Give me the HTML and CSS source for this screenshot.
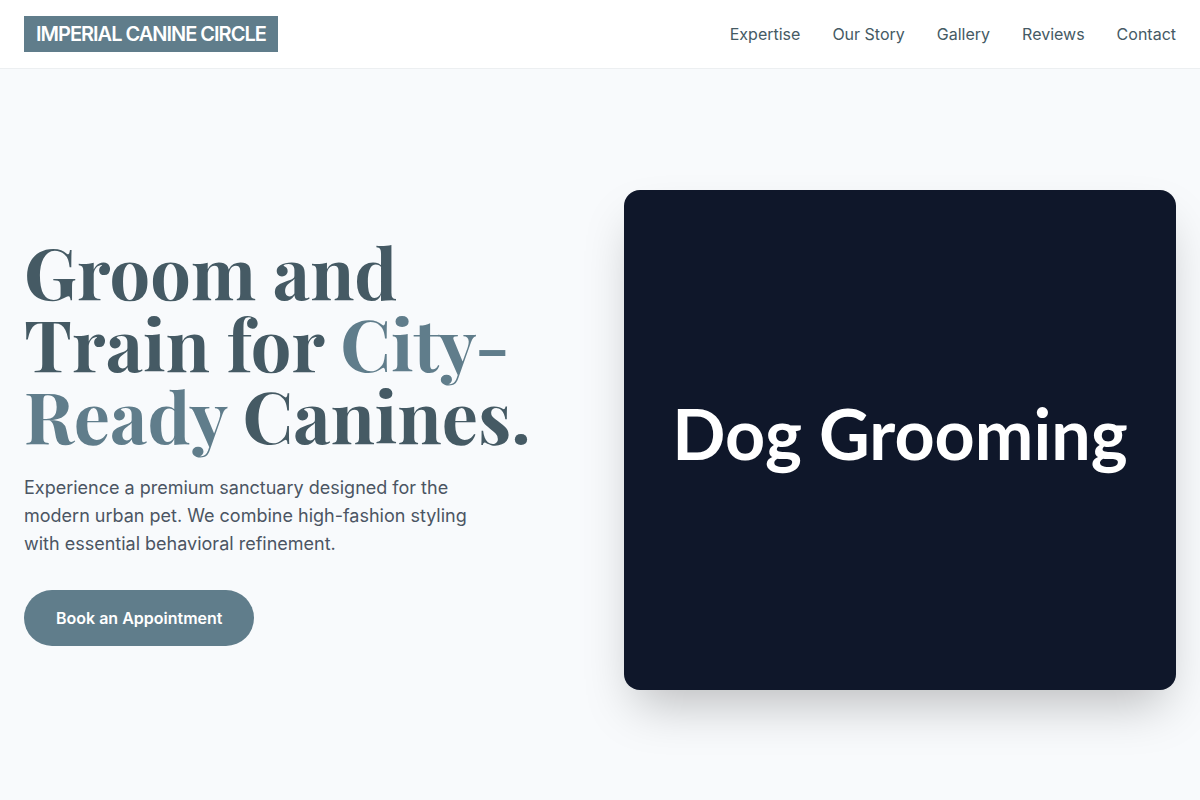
FILE: index.html
```
<!DOCTYPE html>
<html lang="en">
<head>
    <meta charset="UTF-8">
    <meta name="viewport" content="width=device-width, initial-scale=1.0">
    <title>Imperial Canine Circle</title>
    <link rel="stylesheet" href="styles.css">
</head>
<body>
    <header class="site-header">
        <a href="#home" class="logo">IMPERIAL CANINE CIRCLE</a>
        <nav class="nav">
            <a href="#expertise">Expertise</a>
            <a href="#story">Our Story</a>
            <a href="#gallery">Gallery</a>
            <a href="#reviews">Reviews</a>
            <a href="#contact">Contact</a>
        </nav>
    </header>

    <section class="hero" id="home">
        <div class="hero-text">
            <h1>Groom and Train for <span class="accent">City-Ready</span> Canines.</h1>
            <p>Experience a premium sanctuary designed for the modern urban pet. We combine high-fashion styling with essential behavioral refinement.</p>
            <a href="#contact" class="btn">Book an Appointment</a>
        </div>
        <div class="hero-image">
            <span>Dog Grooming</span>
        </div>
    </section>
</body>
</html>
```
FILE: styles.css
```
* {
    box-sizing: border-box;
    margin: 0;
    padding: 0;
}
body {
    font-family: Inter, "Liberation Sans", sans-serif;
    font-size: 16px;
    line-height: 24px;
    color: #455a64;
    background: #f8fafc;
}
a {
    color: inherit;
    text-decoration: none;
}
/* header */
.site-header {
    position: fixed;
    top: 0;
    left: 0;
    right: 0;
    z-index: 10;
    display: flex;
    justify-content: space-between;
    align-items: center;
    padding: 16px 24px;
    background: #fff;
    border-bottom: 1px solid #eceff1;
}
.logo {
    padding: 4px 12px;
    font-size: 20px;
    line-height: 28px;
    font-weight: 600;
    letter-spacing: -1px;
    color: #fff;
    background: #607d8b;
}
.nav {
    display: flex;
    gap: 32px;
}
.nav a:hover {
    color: #607d8b;
}
/* hero */
.hero {
    display: grid;
    grid-template-columns: 1fr 1fr;
    gap: 48px;
    align-items: center;
    min-height: 100vh;
    padding: 80px 24px 0;
}
.hero h1 {
    margin-bottom: 24px;
    font-family: "Playfair Display", "Liberation Serif", serif;
    font-size: 72px;
    line-height: 72px;
    font-weight: 700;
}
.hero .accent {
    color: #607d8b;
}
.hero p {
    max-width: 448px;
    margin-bottom: 32px;
    font-size: 18px;
    line-height: 28px;
    color: #4b5563;
}
.btn {
    display: inline-block;
    padding: 16px 32px;
    font-weight: 600;
    color: #fff;
    background: #607d8b;
    border-radius: 28px;
}
.btn:hover {
    background: #455a64;
}
.hero-image {
    display: flex;
    justify-content: center;
    align-items: center;
    height: 500px;
    padding-bottom: 14px;
    border-radius: 16px;
    background: #0f172a;
    box-shadow: 0 25px 50px -12px rgba(0, 0, 0, 0.25);
    font-family: Lato, sans-serif;
    font-size: 70px;
    line-height: 1;
    font-weight: 700;
    color: #fff;
}
@media (max-width: 768px) {
    .nav {
        display: none;
    }
    .hero {
        grid-template-columns: 1fr;
        padding-bottom: 48px;
    }
    .hero h1 {
        font-size: 48px;
        line-height: 1;
    }
    .hero-image {
        font-size: 40px;
    }
}
```
